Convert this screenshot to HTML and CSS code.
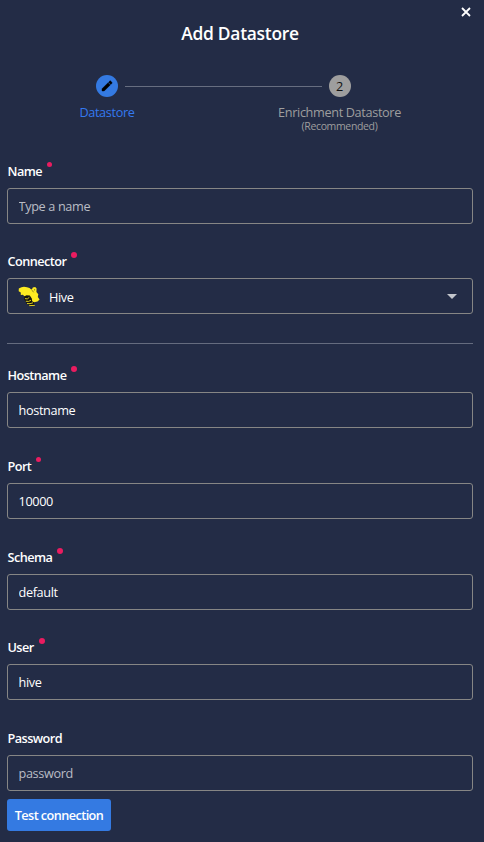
FILE: index.html
```html
<!DOCTYPE html>
<html lang="en">
<head>
<meta charset="utf-8">
<title>Add Datastore</title>
<link rel="stylesheet" href="styles.css">
</head>
<body>
<main class="dialog">
  <button class="close" aria-label="Close"><svg width="10" height="10" viewBox="0 0 10 10"><path d="M1 1l8 8M9 1L1 9" stroke="#fff" stroke-width="1.8"/></svg></button>
  <h1 class="title"><span>Add Datastore</span></h1>
  <div class="stepper">
    <div class="step active">
      <div class="bubble"><svg width="12" height="12" viewBox="0 0 12 12"><path d="M1 11V8.8L7.1 2.7 9.3 4.9 3.2 11zM7.6 2.2L8.8 1Q9.2.6 9.6 1L11 2.4Q11.4 2.8 11 3.2L9.8 4.4z" fill="#000" stroke="#000" stroke-width=".4"/></svg></div>
      <div class="step-name">Datastore</div>
    </div>
    <div class="line"></div>
    <div class="step second">
      <div class="bubble">2</div>
      <div class="step-name">Enrichment Datastore</div>
      <div class="step-note">(Recommended)</div>
    </div>
  </div>
  <form class="form">
    <div class="field"><label for="name"><span>Name</span><i class="dot small"></i></label><input id="name" placeholder="Type a name"></div>
    <div class="field connector"><label><span>Connector</span><i class="dot"></i></label>
      <div class="select">
        <svg class="bee" width="22" height="21" viewBox="0 0 22 21">
          <path d="M6.2 9.5L11 8.5 15 12 16.5 19.5 12 20 8.6 17.5 6.3 13.5z" fill="#15150f"/>
          <path d="M.8 2.6L3.5 1.2 6 .7 9 1.2 11.5 1.9 13.2 3.6 14 3.2 14.8 1.4 17.2 1 18.6 2.6 18.4 6 20.3 8.2 19.8 11 21.6 13.6 19.5 15.5 16 16.2 14.2 15.2 13.8 12.4 11.8 9.6 8.5 9.2 6.5 10.3 4.8 8.8 2.8 9 2.8 6.6.7 5.2z" fill="#fdeb22"/>
          <path d="M7 12.6Q9.5 13.8 11.3 11.4M7.8 15.2Q10.5 16.2 13 14.2M9 17.5Q12 18.2 15 16.8M11.2 19.6L16.8 19.4" fill="none" stroke="#f0df22" stroke-width=".9"/>
          <path d="M14 4.2L15.6 6.3M16.8 3L16.3 4.5" stroke="#4b4615" stroke-width=".6"/>
        </svg>
        <span class="choice">Hive</span><i class="caret"></i>
      </div>
    </div>
    <hr class="divider">
    <div class="field host"><label for="host"><span>Hostname</span><i class="dot"></i></label><input id="host" value="hostname"></div>
    <div class="field"><label for="port"><span>Port</span><i class="dot small"></i></label><input id="port" value="10000"></div>
    <div class="field"><label for="schema"><span>Schema</span><i class="dot"></i></label><input id="schema" value="default"></div>
    <div class="field user"><label for="user"><span>User</span><i class="dot"></i></label><input id="user" value="hive"></div>
    <div class="field"><label for="password"><span>Password</span></label><input id="password" type="password" placeholder="password"></div>
    <button type="button" class="test">Test connection</button>
  </form>
</main>
</body>
</html>
```
FILE: styles.css
```css
* { box-sizing: border-box; }
body { margin: 0; background: #232c46; color: #fff; font: 12.7px "Open Sans", "Noto Sans", sans-serif; letter-spacing: -.35px; }
button, input { font: inherit; color: inherit; letter-spacing: inherit; }
.dialog { position: relative; width: 484px; height: 842px; overflow: hidden; padding: 21px 11px 0 7px; }
.close { position: absolute; top: 7px; right: 13px; width: 10px; height: 10px; padding: 0; border: 0; background: none; }
.close svg { display: block; }
.title { margin: 0; height: 54px; line-height: 24px; text-align: center; font-size: 17.4px; font-weight: 600; letter-spacing: -.25px; }
.stepper { display: flex; height: 79px; padding-left: 40px; }
.step { width: 120px; display: flex; flex-direction: column; align-items: center; color: #9e9e9e; }
.step.active { color: #347ae2; }
.active .step-name { color: #3479f0; }
.bubble { width: 22px; height: 22px; border-radius: 50%; background: #9e9e9e; color: #111; display: flex; align-items: center; justify-content: center; line-height: 22px; }
.active .bubble { background: #347ae2; }
.bubble svg { display: block; }
.step-name { margin-top: 8px; line-height: 14px; white-space: nowrap; }
.step-note { font-size: 10.5px; line-height: 14px; }
.line { width: 197px; height: 1px; margin: 11px -42px 0; background: #676e80; }
.step.second { width: 119px; }
.form { display: flex; flex-direction: column; }
.field { margin-bottom: 21px; }
.field label { display: flex; height: 34px; line-height: 34px; padding-left: .5px; font-weight: 600; letter-spacing: -.55px; }
.dot { width: 6px; height: 6px; border-radius: 50%; margin: 8px 0 0 5px; background: #ea1c60; }
.dot.small { width: 5px; height: 5px; }
.field:first-child { margin-bottom: 20px; }
.field input, .select { display: flex; width: 100%; height: 36px; margin: 0; padding: 0 10px; border: 1px solid #868685; border-radius: 3px; background: transparent; outline: 0; }
.field input { padding-left: 10.5px; }
.field input::placeholder { color: #babdc5; opacity: 1; }
.field.connector { margin-bottom: 29px; }
.select { align-items: center; }
.bee { margin-right: 9px; }
.choice { padding-top: 2px; }
.caret { margin: 0 5px 0 auto; border: 5px solid transparent; border-top-color: #c3c6cc; border-bottom: 0; }
.divider { width: 100%; height: 1px; margin: 0 0 14px; border: 0; background: #656c7f; }
.field:nth-of-type(5) { margin-bottom: 20px; }
.field:nth-of-type(7) { margin-bottom: 8px; }
.test { width: 104px; height: 32px; padding: 0; border: 0; border-radius: 3px; background: #347ae2; font-weight: 600; letter-spacing: -.57px; }
```
